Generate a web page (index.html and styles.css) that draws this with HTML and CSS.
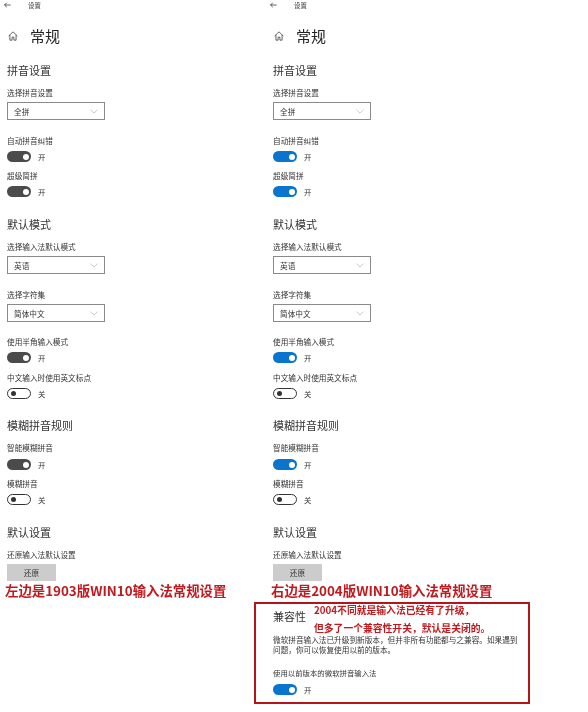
FILE: index.html
```html
<!DOCTYPE html>
<html lang="zh-CN">
<head>
<meta charset="utf-8">
<title>设置</title>
<link rel="stylesheet" href="styles.css">
</head>
<body>
<svg class="defs" width="0" height="0" aria-hidden="true">
  <symbol id="back" viewBox="0 0 8 6"><path d="M3.2 .4.6 3l2.6 2.6M.6 3H7.6" fill="none" stroke="currentColor" stroke-width=".8"/></symbol>
  <symbol id="home" viewBox="0 0 12 12"><path d="M.8 6 6 1l5.2 5M2.3 4.8V11h2.6V7.4h2.2V11h2.6V4.8" fill="none" stroke="currentColor" stroke-width=".9"/></symbol>
  <symbol id="chev" viewBox="0 0 10 6"><path d="M.6.6 5 5 9.4.6" fill="none" stroke="currentColor" stroke-width=".8"/></symbol>
</svg>
<main class="page">
  <section class="col">
    <div class="backbar"><svg class="back"><use href="#back"/></svg><span>设置</span></div>
    <header class="title"><svg class="home"><use href="#home"/></svg><h1>常规</h1></header>
    <h2>拼音设置</h2>
    <div class="label first">选择拼音设置</div>
    <div class="select"><span>全拼</span><svg class="chev"><use href="#chev"/></svg></div>
    <div class="label wide">自动拼音纠错</div>
    <div class="toggle-row"><i class="sw on-grey"></i><span>开</span></div>
    <div class="label">超级简拼</div>
    <div class="toggle-row"><i class="sw on-grey"></i><span>开</span></div>
    <h2>默认模式</h2>
    <div class="label first">选择输入法默认模式</div>
    <div class="select"><span>英语</span><svg class="chev"><use href="#chev"/></svg></div>
    <div class="label wide">选择字符集</div>
    <div class="select"><span>简体中文</span><svg class="chev"><use href="#chev"/></svg></div>
    <div class="label mid">使用半角输入模式</div>
    <div class="toggle-row"><i class="sw on-grey"></i><span>开</span></div>
    <div class="label snug">中文输入时使用英文标点</div>
    <div class="toggle-row"><i class="sw off"></i><span>关</span></div>
    <h2 class="near">模糊拼音规则</h2>
    <div class="label first">智能模糊拼音</div>
    <div class="toggle-row low"><i class="sw on-grey"></i><span>开</span></div>
    <div class="label">模糊拼音</div>
    <div class="toggle-row"><i class="sw off"></i><span>关</span></div>
    <h2>默认设置</h2>
    <div class="label first">还原输入法默认设置</div>
    <div class="button">还原</div>
    <p class="caption">左边是1903版WIN10输入法常规设置</p>
  </section>
  <section class="col">
    <div class="backbar"><svg class="back"><use href="#back"/></svg><span>设置</span></div>
    <header class="title"><svg class="home"><use href="#home"/></svg><h1>常规</h1></header>
    <h2>拼音设置</h2>
    <div class="label first">选择拼音设置</div>
    <div class="select"><span>全拼</span><svg class="chev"><use href="#chev"/></svg></div>
    <div class="label wide">自动拼音纠错</div>
    <div class="toggle-row"><i class="sw on-blue"></i><span>开</span></div>
    <div class="label">超级简拼</div>
    <div class="toggle-row"><i class="sw on-blue"></i><span>开</span></div>
    <h2>默认模式</h2>
    <div class="label first">选择输入法默认模式</div>
    <div class="select"><span>英语</span><svg class="chev"><use href="#chev"/></svg></div>
    <div class="label wide">选择字符集</div>
    <div class="select"><span>简体中文</span><svg class="chev"><use href="#chev"/></svg></div>
    <div class="label mid">使用半角输入模式</div>
    <div class="toggle-row"><i class="sw on-blue"></i><span>开</span></div>
    <div class="label snug">中文输入时使用英文标点</div>
    <div class="toggle-row"><i class="sw off"></i><span>关</span></div>
    <h2 class="near">模糊拼音规则</h2>
    <div class="label first">智能模糊拼音</div>
    <div class="toggle-row low"><i class="sw on-blue"></i><span>开</span></div>
    <div class="label">模糊拼音</div>
    <div class="toggle-row"><i class="sw off"></i><span>关</span></div>
    <h2>默认设置</h2>
    <div class="label first">还原输入法默认设置</div>
    <div class="button">还原</div>
    <p class="caption">右边是2004版WIN10输入法常规设置</p>
    <div class="callout">
      <h2 class="compat">兼容性</h2>
      <div class="note">
        <span>2004不同就是输入法已经有了升级，</span>
        <span>但多了一个兼容性开关，默认是关闭的。</span>
      </div>
      <p class="para">微软拼音输入法已升级到新版本，但并非所有功能都与之兼容。如果遇到问题，你可以恢复使用以前的版本。</p>
      <div class="label para-label">使用以前版本的微软拼音输入法</div>
      <div class="toggle-row low"><i class="sw on-blue"></i><span>开</span></div>
    </div>
  </section>
</main>
</body>
</html>
```
FILE: styles.css
```css
* { box-sizing: border-box; }
html, body { margin: 0; padding: 0; background: #fff; }
body {
  width: 588px;
  height: 712px;
  overflow: hidden;
  font-family: "Noto Sans CJK SC", "Noto Sans", sans-serif;
  color: #333;
}
.defs { position: absolute; }
.page {
  display: grid;
  grid-template-columns: 266px 322px;
  filter: blur(0.35px);
}
.col { padding-left: 7px; min-width: 0; }

.backbar {
  display: flex;
  align-items: center;
  height: 12px;
  margin-left: -3px;
  font-size: 6.4px;
  line-height: 12px;
}
.back { width: 7px; height: 6px; margin: 0 17px 2px 0; color: #222; }

.title { display: flex; align-items: center; height: 18px; margin-top: 15px; }
.home { width: 10px; height: 10px; margin: 0 12px 0 1px; color: #333; }
h1 { margin: 0; font-size: 15px; line-height: 18px; font-weight: 400; color: #222; }

h2 {
  margin: 20px 0 0;
  height: 14px;
  font-size: 11px;
  line-height: 14px;
  font-weight: 400;
  color: #333;
}
.title + h2 { margin-top: 18px; }
h2.near { margin-top: 19px; }

.label { height: 10px; margin-top: 9px; font-size: 7.65px; line-height: 10px; white-space: nowrap; }
.label.first { margin-top: 11px; }
.label.wide { margin-top: 16px; }
.label.mid { margin-top: 15px; }
.label.snug { margin-top: 10px; }

.select {
  display: flex;
  align-items: center;
  justify-content: space-between;
  width: 98px;
  height: 18px;
  margin-top: 4px;
  padding: 0 6px;
  border: 1px solid #8a8a8a;
  font-size: 7.65px;
}
.chev { width: 8px; height: 5px; color: #aaa; }

.toggle-row { display: flex; align-items: center; height: 11px; margin-top: 5px; font-size: 7.4px; line-height: 11px; }
.toggle-row.low { margin-top: 6px; }
.sw {
  position: relative;
  display: block;
  width: 24px;
  height: 11px;
  margin-right: 7px;
  border-radius: 6px;
}
.sw::after {
  content: "";
  position: absolute;
  top: 2.5px;
  width: 6px;
  height: 6px;
  border-radius: 50%;
}
.on-grey { background: #4b4b4b; }
.on-blue { background: #0b74cd; }
.on-grey::after, .on-blue::after { right: 2.5px; background: #fff; }
.off { border: 1.5px solid #333; background: #fff; }
.off::after { top: 1.5px; left: 3px; width: 5px; height: 5px; background: #333; }

.button {
  width: 49px;
  height: 17px;
  margin-top: 4px;
  background: #cccccc;
  font-size: 7.65px;
  line-height: 17px;
  text-align: center;
}
.caption {
  margin: 1px 0 0 -2px;
  height: 16px;
  font-size: 13.4px;
  line-height: 16px;
  font-weight: 700;
  color: #c01a1f;
  white-space: nowrap;
}
.callout {
  position: relative;
  width: 276px;
  height: 102px;
  margin: 4px 0 0 -19px;
  padding: 5px 0 0 17px;
  border: 2px solid #b5141c;
}
h2.compat { margin: 0; }
.note {
  position: absolute;
  left: 58px;
  top: 0;
  display: flex;
  flex-direction: column;
  gap: 6px;
  font-size: 9.8px;
  line-height: 12px;
  font-weight: 700;
  color: #c01a1f;
  white-space: nowrap;
}
.para { width: 246px; margin: 12px 0 0; font-size: 7.65px; line-height: 10px; }
.label.para-label { margin-top: 13px; font-size: 7.4px; }
```
